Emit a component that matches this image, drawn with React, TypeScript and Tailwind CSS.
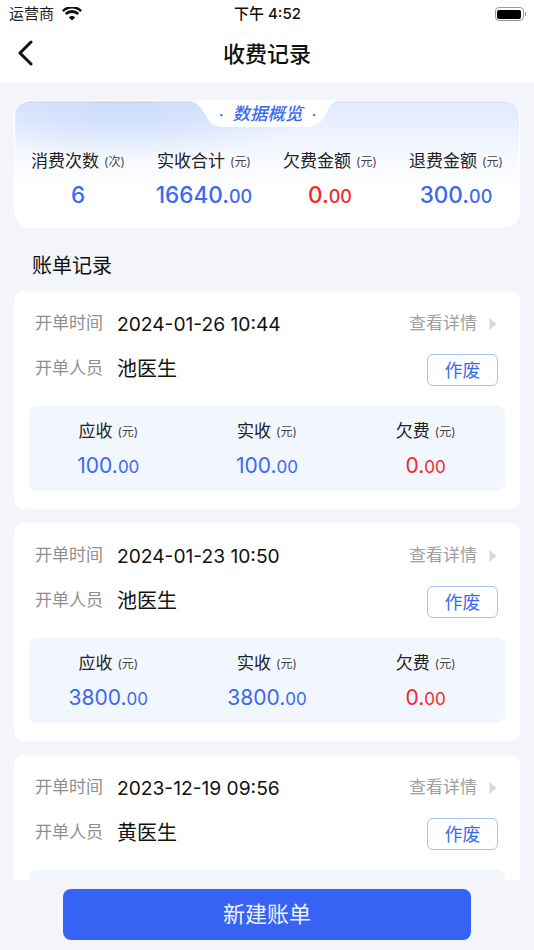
import { FC } from 'react';

type Bill = {
  time: string;
  staff: string;
  due: string;
  paid: string;
};

const bills: Bill[] = [
  { time: '2024-01-26 10:44', staff: '池医生', due: '100', paid: '100' },
  { time: '2024-01-23 10:50', staff: '池医生', due: '3800', paid: '3800' },
  { time: '2023-12-19 09:56', staff: '黄医生', due: '100', paid: '100' },
];

const Amount: FC<{ value: string; red?: boolean; big?: boolean }> = ({ value, red, big }) => (
  <div className={`leading-none ${red ? 'text-[#f02a2a]' : 'text-[#3b6af0]'} ${big ? 'font-medium' : ''}`}>
    <span className={big ? 'text-[22.5px]' : 'text-[21px]'}>{value}.</span>
    <span className={big ? 'text-[18px]' : 'text-[17px]'}>00</span>
  </div>
);

const SummaryItem: FC<{ label: string; unit: string; value: string; red?: boolean; plain?: boolean }> = ({
  label,
  unit,
  value,
  red,
  plain,
}) => (
  <div className="flex flex-col items-center">
    <div className="flex h-[24px] items-center whitespace-nowrap text-[17px] text-[#222]">
      {label}
      <span className="ml-[5px] text-[12px] text-[#444]">({unit})</span>
    </div>
    <div className="mt-[7px] flex h-[28px] items-center">
      {plain ? <span className="text-[22.5px] font-medium text-[#3b6af0]">{value}</span> : <Amount value={value} red={red} big />}
    </div>
  </div>
);

const BillStat: FC<{ label: string; value: string; red?: boolean }> = ({ label, value, red }) => (
  <div className="flex flex-col items-center">
    <div className="flex h-[24px] items-center text-[17px] text-[#222]">
      {label}
      <span className="ml-[5px] text-[12px] text-[#444]">(元)</span>
    </div>
    <div className="mt-[11px]">
      <Amount value={value} red={red} />
    </div>
  </div>
);

const BillCard: FC<{ bill: Bill }> = ({ bill }) => (
  <div className="shrink-0 rounded-[10px] bg-white pb-[18px] pl-[15px] pr-[15px] pt-[19px]">
    <div className="flex h-[28px] items-center pl-[6px]">
      <span className="w-[82px] text-[17px] text-[#8f8f8f]">开单时间</span>
      <span className="text-[19.2px] text-[#111]">{bill.time}</span>
      <span className="ml-auto text-[17px] text-[#a0a0a0]">查看详情</span>
      <svg className="ml-[12px] mr-[8px]" width="8" height="14" viewBox="0 0 8 14">
        <path d="M0.5 1 L7.5 7 L0.5 13 Z" fill="#d8d8d8" />
      </svg>
    </div>
    <div className="mt-[16px] flex h-[32px] items-center pl-[6px]">
      <span className="-mt-[2px] w-[82px] text-[17px] text-[#8f8f8f]">开单人员</span>
      <span className="-mt-[2px] text-[20px] text-[#111]">{bill.staff}</span>
      <button className="ml-auto mr-[7px] flex h-[32px] w-[71px] items-center justify-center rounded-[6px] border border-[#a9c0fa] text-[18px] text-[#3b6af0]">
        作废
      </button>
    </div>
    <div className="mt-[20px] grid h-[85px] grid-cols-3 items-start rounded-[8px] bg-[#f2f6fe] pt-[14px]">
      <BillStat label="应收" value={bill.due} />
      <BillStat label="实收" value={bill.paid} />
      <BillStat label="欠费" value="0" red />
    </div>
  </div>
);

const App: FC = () => {
  return (
    <div className="flex h-[950px] w-[534px] flex-col overflow-hidden bg-[#f3f5fa] font-['Inter','Noto_Sans_CJK_SC',sans-serif]">
      <header className="shrink-0 bg-white">
        <div className="flex h-[28px] items-center justify-between pl-[9px] pr-[8px]">
          <div className="flex w-[120px] items-center gap-[8px] text-[15px] text-[#222]">
            运营商
            <svg width="20" height="14" viewBox="0 0 20 14">
              <path
                d="M10 13.5 L6.8 10.2 a4.6 4.6 0 0 1 6.4 0 Z M4.7 8.1 L2.8 6.1 a10.2 10.2 0 0 1 14.4 0 L15.3 8.1 a7.5 7.5 0 0 0 -10.6 0 Z M1.6 5 L0 3.2 a14.2 14.2 0 0 1 20 0 L18.4 5 a11.8 11.8 0 0 0 -16.8 0 Z"
                fill="#111"
              />
            </svg>
          </div>
          <span className="text-[15px] font-medium text-[#111]">下午 4:52</span>
          <div className="flex w-[120px] items-center justify-end">
            <div className="flex h-[14px] w-[29px] items-center rounded-[4px] border border-[#999] p-[1.5px]">
              <div className="h-full w-full rounded-[2px] bg-black" />
            </div>
            <div className="ml-[1px] h-[4px] w-[1px] bg-[#999]" />
          </div>
        </div>
        <div className="relative flex h-[55px] items-center justify-center">
          <svg className="absolute left-[16px] top-[12px]" width="18" height="26" viewBox="0 0 18 26">
            <path d="M15 2 L4 13 L15 24" fill="none" stroke="#111" strokeWidth="3" strokeLinecap="round" strokeLinejoin="round" />
          </svg>
          <h1 className="-mt-[2px] text-[22px] font-medium text-[#111]">收费记录</h1>
        </div>
      </header>

      <div className="flex min-h-0 flex-1 flex-col overflow-hidden px-[14px] pt-[17px]">
        <section className="relative h-[128px] shrink-0 overflow-hidden rounded-[16px] border border-white bg-[radial-gradient(ellipse_190px_60px_at_110px_0px,#c9dbfc_0%,rgba(201,219,252,0)_100%),linear-gradient(180deg,#dfe8fe_0%,#edf2fe_25%,#f8faff_48%,#ffffff_70%)]">
          <svg className="absolute left-[168px] top-[-1px]" width="159" height="28" viewBox="0 0 159 28">
            <path d="M0 0 C14 0 18 8 22 14 C26 22 30 27 40 27 L125 27 C136 27 141 18 145 10 C148 4 152 0 159 0 Z" fill="#fff" />
          </svg>
          <div className="absolute left-[165px] top-[1px] flex h-[24px] w-[175px] items-center justify-center gap-[9px] text-[17.5px] font-medium italic text-[#3b6af0]">
            <span className="text-[14px] font-bold">·</span>
            数据概览
            <span className="text-[14px] font-bold">·</span>
          </div>
          <div className="grid grid-cols-4 pt-[49px]">
            <SummaryItem label="消费次数" unit="次" value="6" plain />
            <SummaryItem label="实收合计" unit="元" value="16640" />
            <SummaryItem label="欠费金额" unit="元" value="0" red />
            <SummaryItem label="退费金额" unit="元" value="300" />
          </div>
        </section>

        <h2 className="mt-[25px] h-[26px] shrink-0 pl-[18px] text-[20px] leading-[26px] text-[#111]">账单记录</h2>

        <div className="mt-[12px] flex flex-col gap-[14px]">
          {bills.map((bill) => (
            <BillCard key={bill.time} bill={bill} />
          ))}
        </div>
      </div>

      <div className="h-[70px] shrink-0 px-[63px] pt-[9px]">
        <button className="h-[51px] w-[408px] rounded-[8px] bg-[#3763f4] text-[22px] text-[#eef2ff]">新建账单</button>
      </div>
    </div>
  );
};

export default App;
